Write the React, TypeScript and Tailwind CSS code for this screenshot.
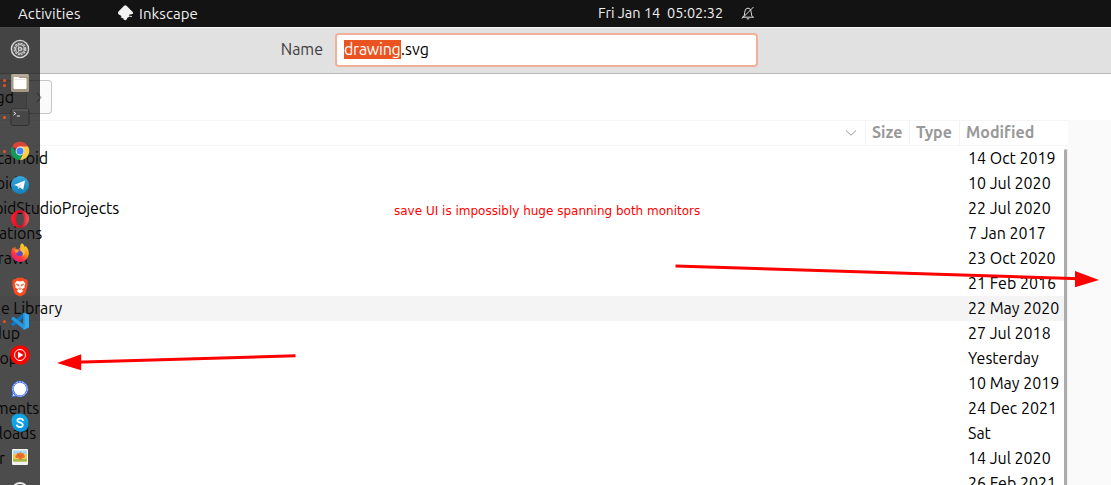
import type { ReactNode } from "react";

const files = [
  { name: "camoid", end: "w-[48px]", modified: "14 Oct 2019" },
  { name: "oid", end: "w-[18px]", modified: "10 Jul 2020" },
  { name: "oidStudioProjects", end: "w-[119px]", modified: "22 Jul 2020" },
  { name: "ations", end: "w-[42px]", modified: "7 Jan 2017" },
  { name: "rawl", end: "w-[28px]", modified: "23 Oct 2020" },
  { name: "", end: "w-[28px]", modified: "21 Feb 2016" },
  { name: "e Library", end: "w-[62px]", modified: "22 May 2020", hover: true },
  { name: "dup", end: "w-[20px]", modified: "27 Jul 2018" },
  { name: "op", end: "w-[18px]", modified: "Yesterday" },
  { name: "", end: "w-[18px]", modified: "10 May 2019" },
  { name: "ments", end: "w-[39px]", modified: "24 Dec 2021" },
  { name: "loads", end: "w-[36px]", modified: "Sat" },
  { name: "r", end: "w-[5px]", modified: "14 Jul 2020" },
  { name: "", end: "w-[5px]", modified: "26 Feb 2021" },
];

function Icon({ children }: { children: ReactNode }) {
  return (
    <svg viewBox="0 0 20 20" className="h-5 w-5 shrink-0">
      {children}
    </svg>
  );
}

const Settings = () => (
  <Icon>
    <circle cx="10" cy="10" r="8.6" fill="#555" stroke="#d8d8d8" strokeWidth="1.4" />
    <circle cx="10" cy="10" r="5.7" fill="none" stroke="#c9c9c9" strokeWidth="1.3" strokeDasharray="2 0.98" />
    <circle cx="10" cy="10" r="4.4" fill="none" stroke="#c9c9c9" strokeWidth="1.3" />
    <circle cx="10" cy="10" r="1.7" fill="#777" stroke="#d0d0d0" strokeWidth="1.2" />
    <path d="M11.5 10h3M9.3 8.7L8 6.5M9.3 11.3L8 13.5" stroke="#c9c9c9" strokeWidth=".8" />
  </Icon>
);
const Files = () => (
  <Icon>
    <rect x="1" y="1" width="18" height="18" rx="1.5" fill="#a39a84" />
    <rect x="1.5" y="1.5" width="17" height="2" rx="1" fill="#b9b19c" />
    <path d="M3.5 5q0-1 1-1h4l1 1h6q1 0 1 1v9q0 1-1 1h-11q-1 0-1-1z" fill="#fff" />
    <path d="M3.5 6.5h13" stroke="#ded9cc" strokeWidth=".6" />
  </Icon>
);
const Terminal = () => (
  <Icon>
    <rect x="1" y="2" width="18" height="16.5" rx="1.8" fill="#474747" stroke="#303030" />
    <path d="M2 3h16" stroke="#777" strokeWidth=".8" />
    <path d="M3.5 5l2.4 1.5-2.4 1.6M6.8 9h3.2" fill="none" stroke="#e0e0e0" strokeWidth="1" />
  </Icon>
);
const Chrome = () => (
  <Icon>
    <path d="M10 10L2.1 5.4A9.1 9.1 0 0 1 18 5.5z" fill="#db4437" />
    <path d="M10 10h4L10 19.1A9.1 9.1 0 0 0 18 5.5H10z" fill="#ffcd40" />
    <path d="M10 19.1A9.1 9.1 0 0 1 2.1 5.4L6 12.2 10 14l2.5-.2z" fill="#0f9d58" />
    <circle cx="10" cy="10" r="4.4" fill="#f1f1f1" />
    <circle cx="10" cy="10" r="3.5" fill="#4285f4" />
  </Icon>
);
const Telegram = () => (
  <Icon>
    <defs>
      <linearGradient id="tg" x2="0" y2="1"><stop stopColor="#35a9de" /><stop offset="1" stopColor="#147fb9" /></linearGradient>
    </defs>
    <circle cx="10" cy="10" r="9" fill="url(#tg)" />
    <path d="M4 9.9L15 5.5 13.2 14.8 9.8 12.3 8.2 14 7.7 11.2z" fill="#fff" />
    <path d="M7.7 11.2L13 7.4 9.4 11.5 8.2 14z" fill="#b9d8e8" />
  </Icon>
);
const Opera = () => (
  <Icon>
    <defs>
      <linearGradient id="op" x2="1" y2="0"><stop stopColor="#ff1b2d" /><stop offset=".45" stopColor="#db0e23" /><stop offset=".6" stopColor="#c4162c" /><stop offset="1" stopColor="#ff595f" /></linearGradient>
    </defs>
    <path fillRule="evenodd" d="M10 1a9 9 0 1 0 0 18a9 9 0 1 0 0-18M10 3.4c5.3 0 5.3 13.2 0 13.2s-5.3-13.2 0-13.2" fill="url(#op)" />
  </Icon>
);
const Firefox = () => (
  <Icon>
    <defs>
      <linearGradient id="ff" x1=".9" y1="0" x2=".2" y2="1"><stop stopColor="#fff044" /><stop offset=".4" stopColor="#ff980e" /><stop offset=".7" stopColor="#ff3647" /><stop offset="1" stopColor="#e31587" /></linearGradient>
    </defs>
    <path d="M12 .3c2 1.2 2.4 3 2.8 4 .4-.4.5-1 .4-1.6 2.3 2 3.8 4.8 3.6 7.8A8.8 8.8 0 0 1 1.2 10C1.1 7.6 2 5.8 3 4.4l.4 1.3 1.8-2.2.2 2.2c1 0 2 .2 2.5.5L10.2 5c-.2-2 .2-3.8 1.8-4.7z" fill="url(#ff)" />
    <circle cx="9.6" cy="9.8" r="3.5" fill="#6548c8" />
    <path d="M4.8 7.3c2-.8 3.5-.2 5.3.2-.7.9-1.8.9-2.5 1.4l-.3 1c-1 .2-2.2-.5-2.5-2.6" fill="#ff9b26" />
    <path d="M11 3c4 2 5.5 6 2.3 10-.1-3-.9-4.5-3.1-5.6z" fill="#ffc13a" />
  </Icon>
);
const Brave = () => (
  <Icon>
    <path d="M5.5 2.3L7 .8h6l1.5 1.5 2-.1 1.5 2.4-.7 1.6.5 1.5-2 7.7Q15 17.2 10 19.6 5 17.2 4.2 15.4L2.2 7.7l.5-1.5L2 4.6l1.5-2.4z" fill="#fb4a22" />
    <path d="M10 4.4l3-.7 2.4 3-1 2 .3 1.7-3 2 1.6 1.5-3.3 2.6-3.3-2.6 1.6-1.5-3-2 .3-1.7-1-2 2.4-3z" fill="#fff" />
    <path d="M6.2 7l2.7.8-.5 1.4zM13.8 7l-2.7.8.5 1.4zM10 9v2.3M8.2 11.5l1.8 1 1.8-1" fill="#fb4a22" stroke="#fb4a22" strokeWidth=".5" />
  </Icon>
);
const VsCode = () => (
  <Icon>
    <path d="M14.2 1.5v4.6L4 14.7 2.9 15 1.3 13.6v-1z" fill="#0878c8" />
    <path d="M1.3 7.3l1.6-1.5L4 6l10.2 8v4.7L1.3 8.2z" fill="#2296df" />
    <path d="M14.2 1.5L19 3.7v12.7l-4.8 2.3-1-.5 1-1.6z" fill="#31a9f3" />
    <path d="M13.2 1.9l1-.4V18.6l-1-.5z" fill="#2697df" />
  </Icon>
);
const YtMusic = () => (
  <Icon>
    <circle cx="10" cy="10" r="9.8" fill="#f00" />
    <circle cx="10" cy="10" r="5.5" fill="none" stroke="#fff" strokeWidth="1" />
    <path d="M8 6.8l5.3 3.2L8 13.2z" fill="#fff" />
  </Icon>
);
const SignalIcon = () => (
  <Icon>
    <path d="M2.8 13.5l-.8 4.3 4.2-1z" fill="#fff" stroke="#3a6ce0" strokeWidth="1.2" />
    <circle cx="10" cy="10" r="8.3" fill="#3a6ce0" />
    <circle cx="10" cy="10" r="7.3" fill="none" stroke="#e8eeff" strokeWidth=".8" strokeDasharray="2.2 .8" />
    <circle cx="10" cy="10" r="6.3" fill="#fff" />
  </Icon>
);
const Skype = () => (
  <Icon>
    <path d="M6.5 1.2c2-.5 3 .1 4 .1A8.6 8.6 0 0 1 18.3 11c.6 5-4 8.5-8.5 7.5A8.5 8.5 0 0 1 1.8 9C1 5 3 1.8 6.5 1.2z" fill="#0699df" />
    <path d="M6.5 1.2A8.6 8.6 0 0 1 18.2 8L4 14A8.5 8.5 0 0 1 1.8 9C1 5 3 1.8 6.5 1.2z" fill="#12a9ea" opacity=".8" />
    <path d="M13 7.1Q12.2 5.5 9.9 5.6 7.3 5.8 7.4 7.7C7.5 9.8 12.9 9.1 12.8 12 12.5 14.6 7.9 14.8 6.9 12.4" fill="none" stroke="#fff" strokeWidth="1.9" strokeLinecap="round" />
  </Icon>
);
const Photos = () => (
  <Icon>
    <rect x="2" y="2" width="16" height="16" rx="1" fill="#f4f3ef" />
    <path d="M3.2 3.5h13.6v11H3.2z" fill="#a5d5ec" />
    <path d="M3.2 7h13.6v7.5H3.2z" fill="#eecb48" />
    <path d="M3.2 12h13.6v2.5H3.2z" fill="#a5b849" />
    <path d="M6 11l-.8-2 1.3-1 .7-2 2 .3L10.3 5l1.3 1.2 2 .1.5 1.8 1 1.2-1.5 1.7-1.6.2-.5 1.3H9l-.5-1.4z" fill="#ee7030" />
    <path d="M8 8l2.3 1.6L12.6 8" fill="none" stroke="#cf5424" strokeWidth=".9" />
  </Icon>
);
const Ring = () => (
  <Icon>
    <circle cx="10" cy="10" r="8" fill="#555" stroke="#eee" strokeWidth="1.8" />
    <path d="M6 6.4q4-2 8 0" fill="none" stroke="#999" />
  </Icon>
);

const dock = [
  { icon: <Settings />, dots: 0 },
  { icon: <Files />, dots: 2 },
  { icon: <Terminal />, dots: 1 },
  { icon: <Chrome />, dots: 1 },
  { icon: <Telegram />, dots: 0 },
  { icon: <Opera />, dots: 0 },
  { icon: <Firefox />, dots: 0 },
  { icon: <Brave />, dots: 0 },
  { icon: <VsCode />, dots: 1 },
  { icon: <YtMusic />, dots: 0 },
  { icon: <SignalIcon />, dots: 0 },
  { icon: <Skype />, dots: 0 },
  { icon: <Photos />, dots: 0 },
  { icon: <Ring />, dots: 0 },
];

function TopBar() {
  return (
    <header className="flex h-[27px] shrink-0 items-center bg-[#131313] pb-px text-[15px] leading-none text-[#f0f0f0]">
      <span className="ml-[18px] w-[100px] tracking-[0.1px]">Activities</span>
      <svg viewBox="0 0 16 16" className="h-4 w-4 shrink-0" fill="#f2f2f2">
        <path d="M6.1.7Q7.3-.4 8.5.7l6.2 6.2q1.1 1.2-.3 2l-3.3.9q-.8.6.7 1 .8.5-.7 1l-2 1.2q.3 1.6-1.8 2.2-2.2-.4-1.8-1.8l-2.5-1q-.9-.6.8-1.2L.9 9.4Q-1 8 .5 6.5z" />
        <path d="M12.6 10.8l1.6.4-.8.8-1.6-.3z" />
      </svg>
      <span className="ml-[5px] w-[459px] tracking-[0.1px]">Inkscape</span>
      <span className="w-[66px] text-[14.5px]">Fri Jan 14</span>
      <span className="w-[77px] pl-[3px] text-[14.5px]">05:02:32</span>
      <svg viewBox="0 0 14 14" className="h-[14px] w-[14px] shrink-0" fill="none" stroke="#ddd" strokeWidth="1">
        <path d="M1 11.2h12M2.5 10.8q1.2-1.2 1.2-4.4Q3.7 2.3 7 2.1q3.2.2 3.3 4.3 0 3.2 1.2 4.4M5.7 12.8h2.6M1 12.5L12.5 1" />
      </svg>
    </header>
  );
}

function FileRows() {
  return (
    <div className="min-w-0 flex-1">
      {files.map((f) => (
        <div key={f.modified} className={f.hover ? "flex h-[25px] items-center bg-[#f4f4f4] pb-px" : "flex h-[25px] items-center pb-px"}>
          <div className="w-[968px]">
            <div className={`flex justify-end whitespace-nowrap tracking-[-0.15px] ${f.end}`}>{f.name}</div>
          </div>
          <span className="whitespace-nowrap">{f.modified}</span>
        </div>
      ))}
    </div>
  );
}

export default function App() {
  return (
    <div className="relative flex h-[485px] w-[1111px] flex-col overflow-hidden bg-white text-[16px] leading-[24px] text-black [font-family:Ubuntu,'Noto_Sans',sans-serif]">
      <TopBar />
      <div className="flex h-[47px] shrink-0 items-start border-t border-b border-t-[#f5f5f5] border-b-[#b8b8b8] bg-[#e1e1e1] pt-[5px]">
        <label className="w-[335px] pt-[4px] pr-3 text-right text-[#3d3d3d]">Name</label>
        <div className="flex h-[34px] w-[423px] items-start rounded-[4px] border-2 border-[#f2b09b] bg-white pt-[5px] pl-[7px]">
          <span className="h-[19px] w-[57px] bg-[#e95420] leading-[18px] tracking-[-0.25px] whitespace-nowrap text-white">drawing</span>
          <span className="h-[19px] leading-[18px]">.svg</span>
        </div>
      </div>
      <div className="flex h-[46px] shrink-0 items-start pt-[6px]">
        <div className="flex h-[34px] w-[52px] items-center overflow-hidden rounded-r-[4px] border border-l-0 border-[#c6c6c6] bg-[#fafafa]">
          <div className="flex h-full w-[27px] items-center justify-end border-r border-[#c6c6c6] bg-[#e1e1e1] pr-[12px]">gd</div>
          <svg viewBox="0 0 24 32" className="h-8 w-6" fill="none" stroke="#aaa" strokeWidth="1.2">
            <path d="M10 12l4 4.5-4 4.5" />
          </svg>
        </div>
      </div>
      <main className="flex min-h-0 flex-1">
        <section className="flex w-[1068px] flex-col border-t border-[#f5f5f5]">
          <div className="flex h-[25px] shrink-0 border-b border-[#f5f5f5] text-[16px] leading-[22px] font-bold text-[#999]">
            <div className="flex w-[866px] items-center justify-end border-r border-[#f3f3f3] pr-[8px]">
              <svg viewBox="0 0 12 8" className="h-2 w-3" fill="none" stroke="#999" strokeWidth="1"><path d="M1 1.5l5 4.7 5-4.7" /></svg>
            </div>
            <span className="w-[44px] border-r border-[#f3f3f3] pl-[6px]">Size</span>
            <span className="w-[50px] border-r border-[#f3f3f3] pl-[6px]">Type</span>
            <span className="pl-[6px] tracking-[0.05px]">Modified</span>
          </div>
          <div className="relative flex min-h-0 flex-1">
            <FileRows />
            <div className="absolute top-[3px] right-0 bottom-0 w-1 rounded-t-sm border-r border-[#eee] bg-[#acacac]" />
          </div>
        </section>
        <aside className="flex-1 bg-[#fafafa]" />
      </main>
      <nav className="absolute top-[27px] bottom-0 left-0 flex w-10 flex-col overflow-hidden bg-[#090909]/73 pt-[5px]">
        {dock.map((d, i) => (
          <div key={i} className="flex h-[34px] shrink-0 items-center">
            <div className="flex w-[10px] flex-col items-center gap-[2px] pr-[1px]">
              {d.dots > 0 && <i className="h-[3px] w-[3px] rounded-full bg-[#e95420]" />}
              {d.dots > 1 && <i className="h-[3px] w-[3px] rounded-full bg-[#e95420]" />}
            </div>
            {d.icon}
          </div>
        ))}
      </nav>
      <span className="absolute top-[203px] left-[394px] text-[12px] leading-[16px] whitespace-nowrap text-[#f00] [font-family:'DejaVu_Sans',sans-serif]">
        save UI is impossibly huge spanning both monitors
      </span>
      <svg viewBox="0 0 1111 485" className="pointer-events-none absolute inset-0 h-[485px] w-[1111px]" fill="#f00">
        <path d="M675.5 266L1080 278.8M295.5 355.8L75 362.2" stroke="#f00" strokeWidth="3" />
        <path d="M1075 271l24 9-24 7.3zM81.2 354.3v16L57 363z" />
      </svg>
    </div>
  );
}
